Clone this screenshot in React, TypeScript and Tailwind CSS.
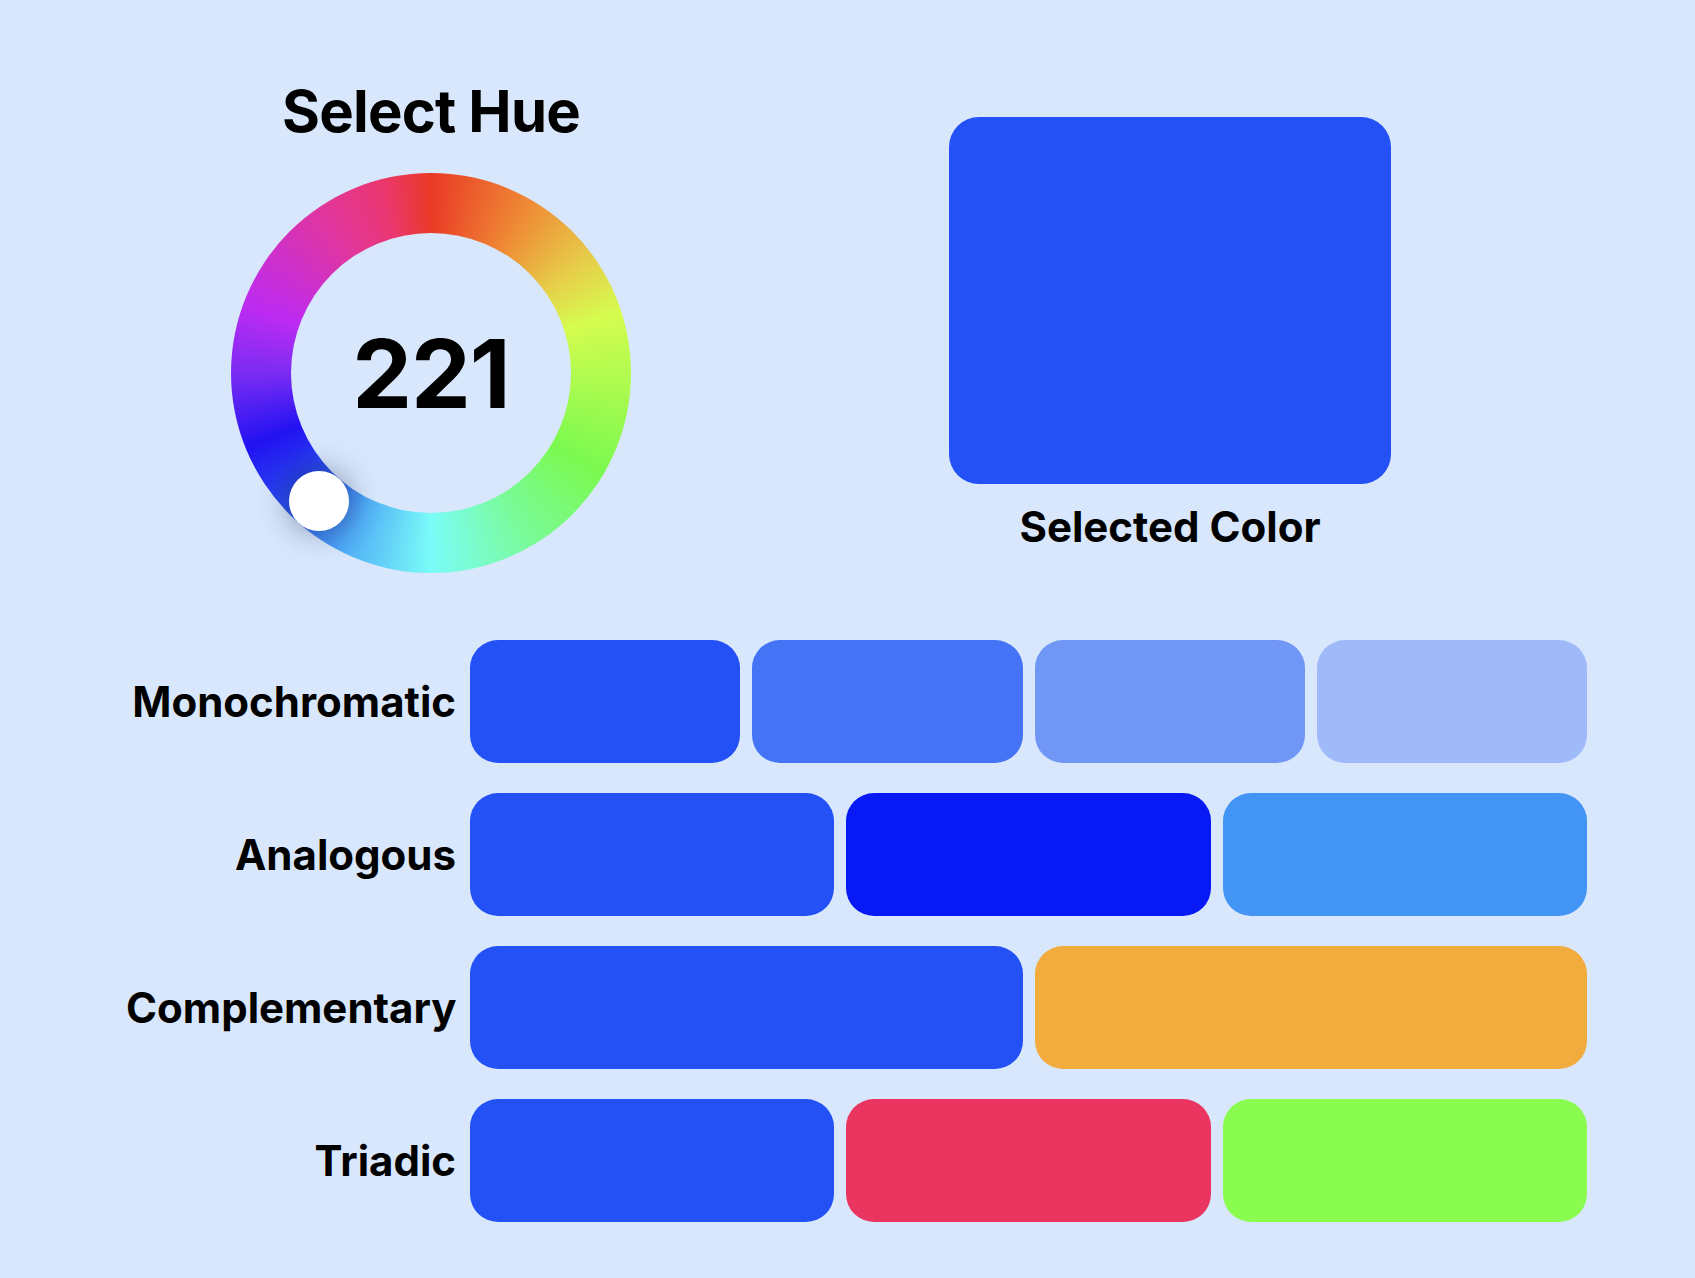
import React from 'react'

const hue = 221

const rows: { label: string; colors: string[] }[] = [
    { label: 'Monochromatic', colors: ['bg-[#2351f5]', 'bg-[#4573f6]', 'bg-[#7197f6]', 'bg-[#a0b9f9]'] },
    { label: 'Analogous', colors: ['bg-[#2351f5]', 'bg-[#0719f5]', 'bg-[#4294f5]'] },
    { label: 'Complementary', colors: ['bg-[#2351f5]', 'bg-[#f2ab3d]'] },
    { label: 'Triadic', colors: ['bg-[#2351f5]', 'bg-[#eb3561]', 'bg-[#89fc4f]'] },
]

function HueWheel() {
    return (
        <div className="relative w-[400px] h-[400px] rounded-full bg-[conic-gradient(from_0deg,#ea3a26_0deg,#ef8a35_30deg,#e6d04a_55deg,#d5fc4f_72deg,#7bf94f_120deg,#7afb9a_150deg,#7afcf8_180deg,#52b0f6_205deg,#2a55ee_225deg,#2212f2_248deg,#7b2cf3_270deg,#bd2bf2_290deg,#e2369c_327deg,#ea3770_345deg,#ea3a26_360deg)]">
            <div className="absolute left-[60px] top-[60px] w-[280px] h-[280px] rounded-full bg-[#d8e7fc] flex items-center justify-center">
                <span className="text-[95px] font-bold leading-none text-black tracking-[-1px]">{hue}</span>
            </div>
            {/* knob */}
            <div className="absolute left-[58px] top-[298px] w-[60px] h-[60px] rounded-full bg-white shadow-[0_0_30px_rgba(20,30,60,0.45)]" />
        </div>
    )
}

export default function App() {
    return (
        <div className="min-h-screen bg-[#d8e7fc] font-['Inter',sans-serif] text-black">
            {/* Top */}
            <div className="flex items-start pl-[231px] pt-[81px]">
                <div className="w-[400px] flex flex-col items-center gap-[32px]">
                    <h1 className="text-[58px] font-bold leading-[60px] tracking-[-0.8px]">Select Hue</h1>
                    <HueWheel />
                </div>

                <div className="ml-[318px] mt-[36px] w-[442px] flex flex-col items-center gap-[22px]">
                    <div className="w-[442px] h-[367px] rounded-[30px] bg-[#2351f5]" />
                    <div className="text-[42px] font-bold leading-none">Selected Color</div>
                </div>
            </div>

            {/* Harmonies */}
            <div className="flex flex-col gap-[30px] pl-[126px] pr-[108px] pt-[67px] pb-[56px]">
                {rows.map(row => (
                    <div key={row.label} className="flex items-center gap-[14px]">
                        <div className="w-[330px] text-right text-[42px] font-bold leading-none">{row.label}</div>
                        <div className="flex-1 flex gap-[12px]">
                            {row.colors.map((c, i) => (
                                <div key={i} className={`flex-1 h-[123px] rounded-[28px] ${c}`} />
                            ))}
                        </div>
                    </div>
                ))}
            </div>
        </div>
    )
}
